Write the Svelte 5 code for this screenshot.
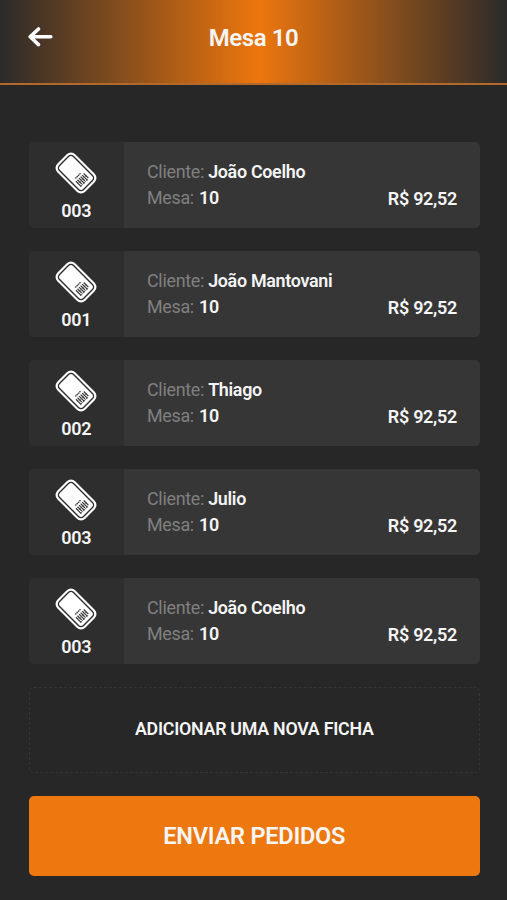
<script>
    const fichas = [
        { numero: '003', cliente: 'João Coelho', mesa: 10, valor: 'R$ 92,52' },
        { numero: '001', cliente: 'João Mantovani', mesa: 10, valor: 'R$ 92,52' },
        { numero: '002', cliente: 'Thiago', mesa: 10, valor: 'R$ 92,52' },
        { numero: '003', cliente: 'Julio', mesa: 10, valor: 'R$ 92,52' },
        { numero: '003', cliente: 'João Coelho', mesa: 10, valor: 'R$ 92,52' },
    ];
</script>

<div class="page">
    <header>
        <button class="back" aria-label="Voltar">
            <svg width="26" height="22" viewBox="0 0 26 22">
                <path d="M11.5 2 3.2 9.8 11.5 17.6M3.8 9.8H23.8" />
            </svg>
        </button>
        <h1>Mesa 10</h1>
    </header>

    <main>
        {#each fichas as ficha}
            <div class="card">
                <div class="ficha">
                    <svg width="42" height="42" viewBox="-21 -21 42 42">
                        <g transform="rotate(-45)">
                            <rect x="-12.7" y="-19.8" width="25.4" height="39.6" rx="6" fill="#fff" />
                            <rect x="-9.9" y="-17" width="19.8" height="34" rx="3.6" fill="none" stroke="#2e2e2e" stroke-width="1.4" />
                            <path d="M-4.5 3.4H3" stroke="#444" stroke-width="1.4" stroke-dasharray="1.6 .4" />
                            <path d="M-5.9 5.8V13.4M-3.7 5.8V12M-1.5 5.8V13.4M.7 5.8V12M2.9 5.8V13.4M5.1 5.8V12.4" stroke="#333" stroke-width="1.2" />
                            <path d="M-6.5 9H5.7M-6.5 12.8H4" stroke="#555" stroke-width=".8" />
                        </g>
                    </svg>
                    <strong>{ficha.numero}</strong>
                </div>

                <div class="info">
                    <p>Cliente: <b>{ficha.cliente}</b></p>
                    <p>Mesa: <b class="mesa">{ficha.mesa}</b></p>
                </div>

                <span class="valor">{ficha.valor}</span>
            </div>
        {/each}

        <button class="add">ADICIONAR UMA NOVA FICHA</button>
        <button class="send">ENVIAR PEDIDOS</button>
    </main>
</div>

<style>
    :global(body) {
        background: #272727;
    }

    .page {
        min-height: 900px;
        box-sizing: border-box;
        background: #272727;
        color: #f5f5f5;
        font-family: Roboto, "Liberation Sans", sans-serif;
    }

    button {
        padding: 0;
        border: 0;
        background: none;
        color: inherit;
        font-family: inherit;
        cursor: pointer;
    }

    header {
        display: grid;
        grid-template-columns: 60px 1fr 60px;
        align-items: center;
        height: 85px;
        padding-bottom: 8px;
        box-sizing: border-box;
        border-bottom: 2px solid #b3692a;
        background: linear-gradient(90deg, #2b2a2a 0%, #ed760e 51%, #2b2a2a 100%);
    }

    .back {
        display: flex;
        padding-left: 27px;
    }

    .back svg {
        fill: none;
        stroke: #fff;
        stroke-width: 3.6;
        stroke-linecap: round;
        stroke-linejoin: round;
    }

    h1 {
        margin: 0;
        text-align: center;
        font-size: 24px;
        font-weight: 600;
        line-height: 28px;
        letter-spacing: -.4px;
    }

    main {
        display: flex;
        flex-direction: column;
        gap: 23px;
        padding: 56.5px 27px 0 28.5px;
    }

    .card {
        display: flex;
        height: 86px;
        overflow: hidden;
        border-radius: 5px;
        background: #363636;
    }

    .ficha {
        display: flex;
        flex-direction: column;
        align-items: center;
        width: 95.5px;
        padding-top: 10.5px;
        box-sizing: border-box;
        background: #2e2e2e;
    }

    .ficha strong {
        margin-top: 6.5px;
        font-size: 18px;
        font-weight: 600;
        line-height: 20px;
        letter-spacing: -.3px;
    }

    .info {
        flex: 1;
        padding: 17.5px 0 0 23px;
    }

    p {
        margin: 0;
        color: #808080;
        font-size: 17.9px;
        line-height: 26px;
        letter-spacing: -.3px;
    }

    b {
        color: #f5f5f5;
        font-weight: 600;
    }

    .mesa {
        margin-left: 1px;
    }

    .valor {
        align-self: flex-end;
        padding: 0 23px 17.5px 0;
        font-size: 18px;
        font-weight: 600;
        line-height: 22px;
        letter-spacing: -.3px;
    }

    .add {
        height: 86px;
        padding-bottom: 2px;
        border: 1px dashed #343434;
        border-radius: 5px;
        font-size: 17.8px;
        font-weight: 600;
        letter-spacing: -.25px;
    }

    .send {
        height: 80px;
        border-radius: 5px;
        background: #ed780f;
        font-size: 23.6px;
        font-weight: 600;
        letter-spacing: -.25px;
    }
</style>
